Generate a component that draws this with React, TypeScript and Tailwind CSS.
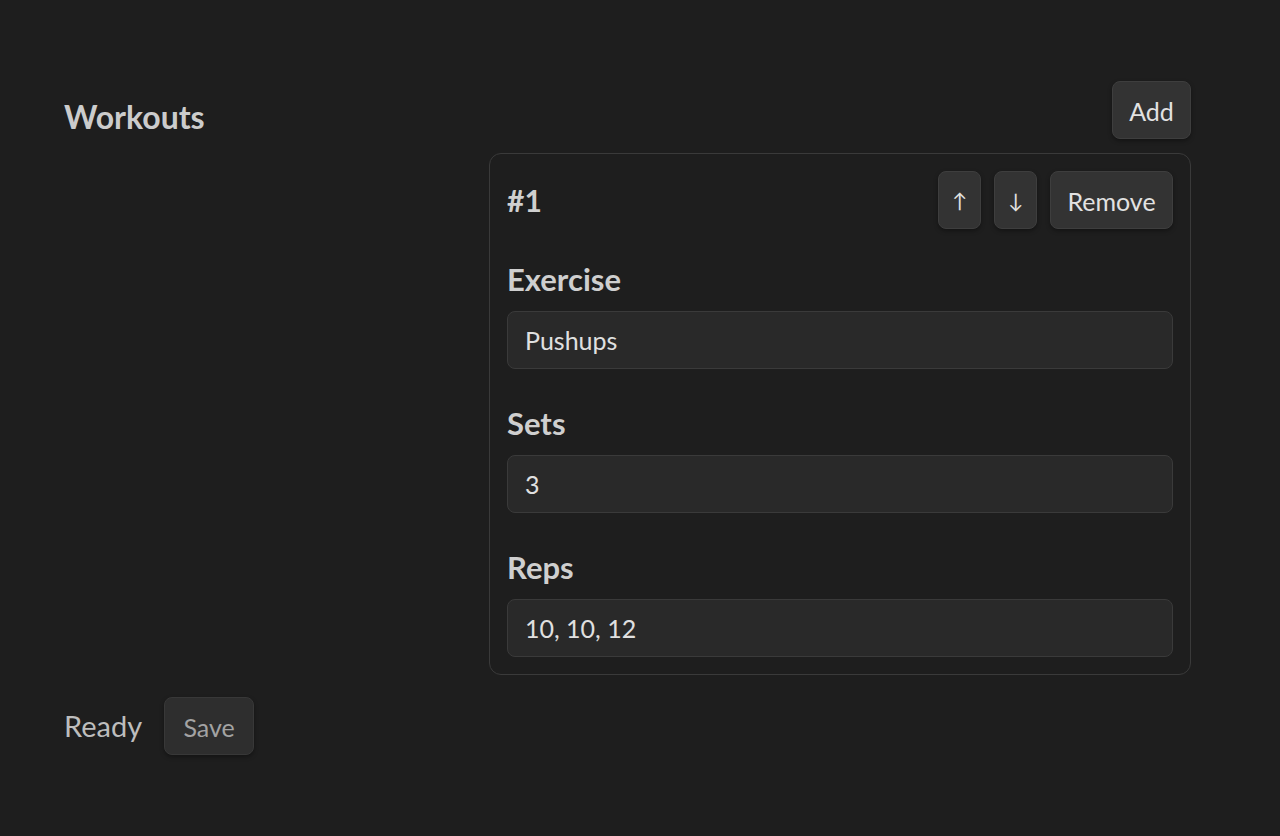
import { useState } from "react";

const font = { fontFamily: '"Segoe UI", Lato, "Noto Sans", sans-serif' };

export default function App() {
    const [exercise, setExercise] = useState("Pushups");
    const [sets, setSets] = useState("3");
    const [reps, setReps] = useState("10, 10, 12");

    const btn = "h-[58px] rounded-[8px] bg-[#333333] border border-[#3e3e3e] text-[25px] text-[#e2e2e2] shadow-[0_2px_4px_rgba(0,0,0,0.35)] flex items-center justify-center";
    const input = "w-full h-[58px] rounded-[8px] bg-[#292929] border border-[#3a3a3a] px-[17px] text-[25px] text-[#e0e0e0] outline-none";
    const label = "block text-[31px] leading-[36px] font-bold text-[#cfcfcf] mb-[14px]";

    return (
        <div className="min-h-[836px] bg-[#1e1e1e] pt-[81px] pl-16 pr-[89px]" style={font}>
            <div className="flex">
                <div className="flex-1 pt-[17px]">
                    <h2 className="text-[32px] leading-[38px] font-bold text-[#cccccc]">Workouts</h2>
                </div>
                <div className="w-[702px] flex flex-col">
                    <div className="flex justify-end mb-[14px]">
                        <button className={`${btn} w-[79px] pt-[3px]`}>Add</button>
                    </div>
                    <div className="rounded-[12px] border border-[#3a3a3a] p-[17px]">
                        <div className="flex items-center justify-between mb-[32px]">
                            <span className="text-[30px] font-bold text-[#cfcfcf]">#1</span>
                            <div className="flex gap-[13px]">
                                <button className={`${btn} w-[43px] !text-[20px]`}>↑</button>
                                <button className={`${btn} w-[43px] !text-[20px]`}>↓</button>
                                <button className={`${btn} w-[123px] pt-[3px]`}>Remove</button>
                            </div>
                        </div>
                        <div className="flex flex-col gap-[36px]">
                            <div>
                                <label className={label}>Exercise</label>
                                <input className={input} value={exercise} onChange={(e) => setExercise(e.target.value)} />
                            </div>
                            <div>
                                <label className={label}>Sets</label>
                                <input className={input} value={sets} onChange={(e) => setSets(e.target.value)} />
                            </div>
                            <div>
                                <label className={label}>Reps</label>
                                <input className={input} value={reps} onChange={(e) => setReps(e.target.value)} />
                            </div>
                        </div>
                    </div>
                </div>
            </div>
            <div className="flex items-center gap-[22px] mt-[22px]">
                <span className="text-[29px] text-[#bdbdbd]">Ready</span>
                <button className="h-[58px] w-[90px] pt-[3px] rounded-[8px] bg-[#2e2e2e] border border-[#383838] text-[25px] text-[#a3a3a3] shadow-[0_2px_4px_rgba(0,0,0,0.35)]">Save</button>
            </div>
        </div>
    );
}
